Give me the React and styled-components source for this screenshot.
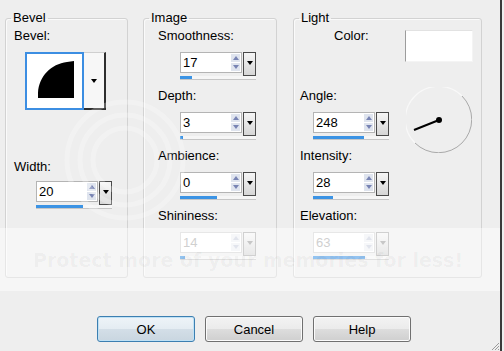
import React from 'react';
import styled, { createGlobalStyle } from 'styled-components';

const Global = createGlobalStyle`
  html, body { margin: 0; padding: 0; background: #eeeeee; }
  body {
    font-family: "Liberation Sans", Arial, sans-serif;
    font-size: 13px;
    color: #000;
  }
`;

const Window = styled.div`
  position: relative;
  width: 504px;
  height: 351px;
  overflow: hidden;
  background: #eeeeee;
  display: flex;
`;

const Dialog = styled.div`
  width: 500px;
  border-right: 2px solid #3a3a3a;
  display: flex;
  flex-direction: column;
`;

const Groups = styled.div`
  display: flex;
  align-items: stretch;
  height: 278px;
  padding: 10px 0 0 5px;
  box-sizing: border-box;
`;

const Group = styled.fieldset`
  margin: 0 ${p => p.$gap || 0}px 0 0;
  padding: 0;
  width: ${p => p.$w}px;
  min-width: 0;
  box-sizing: border-box;
  border: 1px solid #d2d2d2;
  border-radius: 3px;
  box-shadow: inset 1px 1px 0 #fafafa;
`;

const Legend = styled.legend`
  margin-left: 5px;
  padding: 0 2px;
  font-size: 13px;
  line-height: 16px;
`;

const Body = styled.div`
  display: flex;
  flex-direction: column;
  align-items: flex-start;
  padding: ${p => p.$pad};
`;

const Label = styled.div`
  font-size: 13px;
  line-height: 16px;
  white-space: nowrap;
  margin-top: ${p => p.$top || 0}px;
  margin-left: ${p => p.$left || 0}px;
`;

const Block = styled.div`
  display: flex;
  flex-direction: column;
  align-items: flex-start;
  margin-top: ${p => p.$top || 0}px;
`;

/* spinner with drop button and value bar */
const Spin = styled.div`
  display: grid;
  grid-template-columns: 62px 13px;
  grid-template-rows: 21px 3px 4px;
  column-gap: 1px;
  width: 76px;
  margin: ${p => p.$top || 8}px 0 0 ${p => p.$left || 0}px;
`;

const Field = styled.div`
  grid-column: 1;
  grid-row: 1;
  display: flex;
  align-items: center;
  justify-content: space-between;
  background: #fff;
  border: 1px solid ${p => (p.$off ? '#d4d4d4' : '#b4b4b4')};
  box-sizing: border-box;
  padding-left: 2px;
  font-size: 13px;
  color: ${p => (p.$off ? '#a9a9a9' : '#000')};
`;

const Arrows = styled.div`
  display: flex;
  flex-direction: column;
  gap: 1px;
  margin-right: 1px;
`;

const ArrowBtn = styled.div`
  width: 9px;
  height: 8px;
  background: ${p => (p.$off ? '#eef0f4' : '#dfe4ee')};
  display: flex;
  align-items: center;
  justify-content: center;
  &::after {
    content: '';
    border-left: 3px solid transparent;
    border-right: 3px solid transparent;
    ${p => (p.$up ? 'border-bottom' : 'border-top')}: 4px solid ${p => (p.$off ? '#c9cedd' : '#7884b4')};
  }
`;

const DropBtn = styled.div`
  grid-column: 2;
  grid-row: 1 / span 2;
  box-sizing: border-box;
  border: 1px solid ${p => (p.$off ? '#a9a9a9' : '#4a4a4a')};
  background: linear-gradient(#f6f6f6, #d6d6d6);
  display: flex;
  align-items: center;
  justify-content: center;
  &::after {
    content: '';
    margin-top: -2px;
    border-left: 3px solid transparent;
    border-right: 3px solid transparent;
    border-top: 4px solid ${p => (p.$off ? '#999' : '#000')};
  }
`;

const Bar = styled.div`
  grid-column: 1 / span 2;
  grid-row: 3;
  background: #f6f6f6;
  border-bottom: 1px solid #c6c6c6;
  display: flex;
`;

const Fill = styled.div`
  width: ${p => p.$w}px;
  background: #3b93e4;
`;

const Spinner = ({ value, fill, off, top, left }) => (
  <Spin $top={top} $left={left}>
    <Field $off={off}>
      {value}
      <Arrows>
        <ArrowBtn $up $off={off} />
        <ArrowBtn $off={off} />
      </Arrows>
    </Field>
    <DropBtn $off={off} />
    <Bar>
      <Fill $w={fill} />
    </Bar>
  </Spin>
);

const Picker = styled.div`
  display: flex;
  margin: 8px 0 0 11px;
`;

const Preview = styled.div`
  width: 59px;
  height: 58px;
  box-sizing: border-box;
  border: 2px solid #3c8ee2;
  background: #fff;
`;

const PickerDrop = styled.div`
  width: 22px;
  height: 58px;
  box-sizing: border-box;
  border: 1px solid #cfcfcf;
  border-right: 2px solid #2e2e2e;
  border-bottom: 2px solid #2e2e2e;
  border-left: none;
  background: #f7f7f7;
  display: flex;
  align-items: center;
  justify-content: center;
  &::after {
    content: '';
    border-left: 3px solid transparent;
    border-right: 3px solid transparent;
    border-top: 4px solid #000;
  }
`;

const ColorRow = styled.div`
  display: flex;
  align-items: flex-start;
  width: 100%;
  height: 32px;
`;

const Swatch = styled.div`
  margin-left: auto;
  width: 68px;
  height: 32px;
  box-sizing: border-box;
  background: #fff;
  border-top: 1px solid #e2e2e2;
  border-left: 1px solid #9c9c9c;
  border-right: 1px solid #f4f4f4;
  border-bottom: 1px solid #f4f4f4;
`;

const AngleRow = styled.div`
  display: flex;
  align-items: flex-start;
  width: 100%;
  margin-top: 26px;
`;

const Dial = styled.svg`
  margin: -1px 1px -13px auto;
  flex: none;
`;

const Actions = styled.div`
  flex: 1;
  display: flex;
  align-items: flex-start;
  gap: 10px;
  padding: 38px 0 0 97px;
`;

const Button = styled.button`
  width: 98px;
  height: 26px;
  padding: 0;
  font-family: "Liberation Sans", Arial, sans-serif;
  font-size: 13px;
  color: #000;
  border-radius: 3px;
  border: 1px solid ${p => (p.$primary ? '#3c7fb1' : '#707070')};
  box-shadow: inset 0 0 0 1px ${p => (p.$primary ? '#bfe1f5' : '#fbfbfb')};
  background: ${p =>
    p.$primary
      ? 'linear-gradient(#eef4f8 0%, #e4ecf2 50%, #d3dee7 51%, #c9d6e0 100%)'
      : 'linear-gradient(#f3f3f3 0%, #ebebeb 50%, #dddddd 51%, #cfcfcf 100%)'};
`;

const Grip = styled.svg`
  margin-left: auto;
  align-self: flex-end;
`;

const Watermark = styled.div`
  position: absolute;
  left: 0;
  top: 228px;
  width: 500px;
  height: 63px;
  background: rgba(255, 255, 255, 0.45);
  display: flex;
  align-items: center;
  padding-left: 33px;
  box-sizing: border-box;
  font-family: "DejaVu Sans", Verdana, sans-serif;
  font-weight: bold;
  font-size: 19px;
  color: rgba(0, 0, 0, 0.045);
  white-space: nowrap;
  pointer-events: none;
`;

const Rings = styled.svg`
  position: absolute;
  left: 60px;
  top: 98px;
  pointer-events: none;
`;

export default function App() {
  return (
    <>
      <Global />
      <Window>
        <Dialog>
          <Groups>
            <Group $w={123} $gap={15}>
              <Legend>Bevel</Legend>
              <Body $pad="2px 0 0 8px">
                <Label>Bevel:</Label>
                <Picker>
                  <Preview>
                    <svg width="55" height="54" viewBox="0 0 55 54">
                      <path d="M11 44 L11 39 C12 22 24 10 40 8 L47 7 L47 44 Z" fill="#000" />
                    </svg>
                  </Preview>
                  <PickerDrop />
                </Picker>
                <Label $top={49}>Width:</Label>
                <Spinner value="20" fill={47} top={6} left={22} />
              </Body>
            </Group>

            <Group $w={134} $gap={16}>
              <Legend>Image</Legend>
              <Body $pad="2px 0 0 14px">
                <Block>
                  <Label>Smoothness:</Label>
                  <Spinner value="17" fill={12} left={22} />
                </Block>
                <Block $top={8}>
                  <Label>Depth:</Label>
                  <Spinner value="3" fill={3} left={22} />
                </Block>
                <Block $top={8}>
                  <Label>Ambience:</Label>
                  <Spinner value="0" fill={37} left={22} />
                </Block>
                <Block $top={8}>
                  <Label>Shininess:</Label>
                  <Spinner value="14" fill={5} off left={22} />
                </Block>
              </Body>
            </Group>

            <Group $w={189}>
              <Legend>Light</Legend>
              <Body $pad="4px 8px 0 6px">
                <ColorRow>
                  <Label $top={-2} $left={34}>Color:</Label>
                  <Swatch />
                </ColorRow>
                <AngleRow>
                  <Block>
                    <Label>Angle:</Label>
                    <Spinner value="248" fill={51} left={13} />
                  </Block>
                  <Dial width="66" height="66" viewBox="0 0 66 66">
                    <path d="M9 56 A32 32 0 0 1 56 9" fill="none" stroke="#f8f8f8" strokeWidth="1.2" />
                    <path d="M56 9 A32 32 0 0 1 9 56" fill="none" stroke="#a9a9a9" strokeWidth="1" />
                    <line x1="33" y1="33" x2="8" y2="43" stroke="#000" strokeWidth="2" />
                    <circle cx="33" cy="33" r="3" fill="#000" />
                  </Dial>
                </AngleRow>
                <Block $top={8}>
                  <Label>Intensity:</Label>
                  <Spinner value="28" fill={20} left={13} />
                </Block>
                <Block $top={8}>
                  <Label>Elevation:</Label>
                  <Spinner value="63" fill={52} off left={13} />
                </Block>
              </Body>
            </Group>
          </Groups>

          <Actions>
            <Button $primary>OK</Button>
            <Button>Cancel</Button>
            <Button>Help</Button>
            <Grip width="10" height="10" viewBox="0 0 10 10">
              <path d="M9 2 L2 9 M9 5 L5 9 M9 8 L8 9" stroke="#9a9a9a" strokeWidth="1" />
            </Grip>
          </Actions>
        </Dialog>

        <Rings width="130" height="130" viewBox="0 0 130 130">
          <circle cx="65" cy="62" r="58" fill="none" stroke="rgba(255,255,255,0.25)" strokeWidth="5" />
          <circle cx="65" cy="62" r="45" fill="none" stroke="rgba(255,255,255,0.25)" strokeWidth="5" />
          <circle cx="65" cy="62" r="32" fill="none" stroke="rgba(255,255,255,0.25)" strokeWidth="5" />
        </Rings>
        <Watermark>Protect more of your memories for less!</Watermark>
      </Window>
    </>
  );
}
